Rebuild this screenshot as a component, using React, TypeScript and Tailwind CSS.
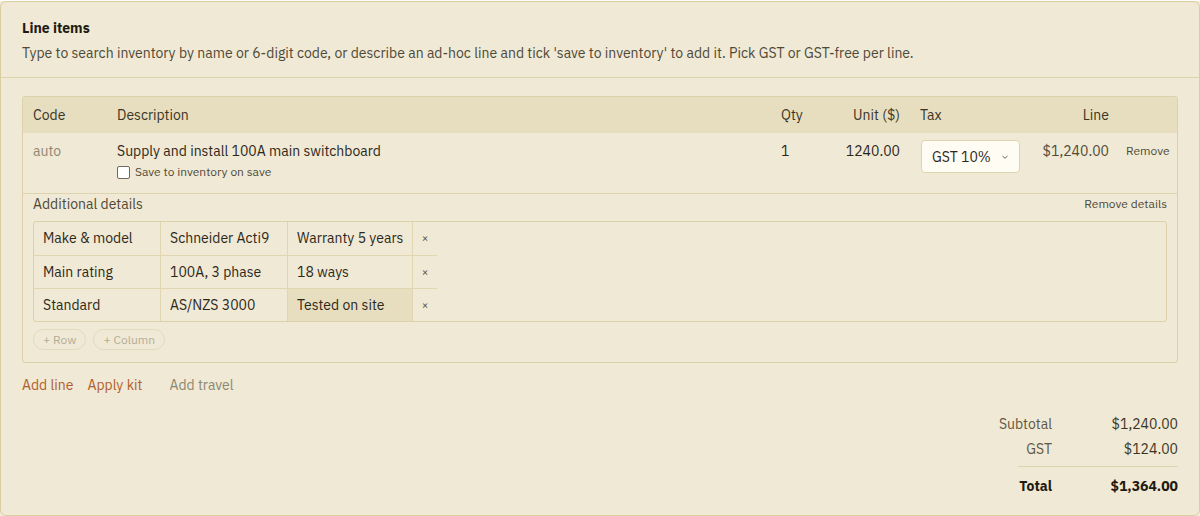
import React from 'react';

const detailRows = [
  ['Make & model', 'Schneider Acti9', 'Warranty 5 years'],
  ['Main rating', '100A, 3 phase', '18 ways'],
  ['Standard', 'AS/NZS 3000', 'Tested on site'],
];

const totals = [
  { label: 'Subtotal', value: '$1,240.00' },
  { label: 'GST', value: '$124.00' },
];

export default function App() {
  return (
    <div
      className="w-[1200px] h-[516px] bg-[#f1ead7] text-[#2c2819]"
      style={{ fontFamily: '"IBM Plex Sans", "Liberation Sans", Arial, sans-serif' }}
    >
      <div className="h-[515px] mt-px border border-[#d9cea2] rounded-md bg-[#f0e9d5] flex flex-col">
        {/* Header */}
        <div className="px-[21px] pt-[16px] pb-[14px] border-b border-[#ddd3ad]">
          <h2 className="text-[14px] leading-5 font-bold text-[#1f1b10]">Line items</h2>
          <p className="mt-[5px] text-[14px] leading-5 text-[#4f4a38]">
            Type to search inventory by name or 6-digit code, or describe an ad-hoc line and tick 'save to inventory' to add it. Pick GST or GST-free per line.
          </p>
        </div>

        {/* Body */}
        <div className="px-[21px] pt-[18px] flex flex-col">
          <div className="border border-[#dcd1a8] rounded-[3px] overflow-hidden">
            {/* Column header */}
            <div className="grid grid-cols-[84px_1fr_61px_81px_120px_89px_58px] h-[36px] items-center bg-[#e7dec0] text-[14px] text-[#3a3524]">
              <div className="pl-[10px]">Code</div>
              <div className="pl-[10px]">Description</div>
              <div className="pl-[13px]">Qty</div>
              <div className="pr-[10px] text-right">Unit ($)</div>
              <div className="pl-[10px]">Tax</div>
              <div className="pr-[10px] text-right">Line</div>
              <div />
            </div>

            {/* Line row */}
            <div className="grid grid-cols-[84px_1fr_61px_81px_120px_89px_58px] h-[60px] items-start pt-[8px] text-[14px] leading-5">
              <div className="pl-[10px] text-[#8f8872]">auto</div>
              <div className="pl-[10px]">
                <div className="text-[#2c2819]">Supply and install 100A main switchboard</div>
                <label className="mt-[3px] flex items-center gap-[5px] text-[12px] leading-4 text-[#4f4a38]">
                  <span className="w-[13px] h-[13px] rounded-[2px] border border-[#6f6a5a] bg-white" />
                  Save to inventory on save
                </label>
              </div>
              <div className="pl-[13px]">1</div>
              <div className="pr-[10px] text-right">1240.00</div>
              <div className="pl-[11px]">
                <div className="w-[99px] h-[33px] -mt-[1px] rounded-[4px] border border-[#ddd3ad] bg-[#fffcf3] flex items-center pl-[10px] gap-[10px] text-[14px]">
                  GST 10%
                  <svg width="8" height="8" viewBox="0 0 8 8" className="text-[#6b6552]">
                    <path d="M1.5 3 L4 5.3 L6.5 3" fill="none" stroke="currentColor" strokeWidth="1" />
                  </svg>
                </div>
              </div>
              <div className="pr-[10px] text-right text-[#4f4a38]">$1,240.00</div>
              <div className="pl-[7px] text-[12px] text-[#4f4a38]">Remove</div>
            </div>

            {/* Additional details */}
            <div className="border-t border-[#ddd3ad] px-[10px] pb-[12px]">
              <div className="flex items-center justify-between h-[20px]">
                <span className="text-[14px] text-[#4f4a38]">Additional details</span>
                <span className="text-[12px] text-[#4f4a38]">Remove details</span>
              </div>
              <div className="mt-[7px] border border-[#dcd1a8] rounded-[3px]">
                <div className="w-[403px]">
                  {detailRows.map((row, i) => (
                    <div
                      key={i}
                      className={`grid grid-cols-[127px_127px_125px_24px] h-[33px] ${i > 0 ? 'border-t border-[#e0d6b2]' : ''}`}
                    >
                      {row.map((cell, j) => (
                        <div
                          key={j}
                          className={`flex items-center pl-[9px] text-[14px] border-r border-[#e0d6b2] text-[#2c2819] ${i === 2 && j === 2 ? 'bg-[#e7dec0]' : ''}`}
                        >
                          {cell}
                        </div>
                      ))}
                      <div className="flex items-center justify-center text-[11px] text-[#4f4a38]">×</div>
                    </div>
                  ))}
                </div>
              </div>
              <div className="mt-[7px] flex gap-[7px]">
                <span className="h-[21px] px-[9px] rounded-full border border-[#e3dabb] text-[12px] leading-[19px] text-[#b3ad98]">+ Row</span>
                <span className="h-[21px] px-[9px] rounded-full border border-[#e3dabb] text-[12px] leading-[19px] text-[#b3ad98]">+ Column</span>
              </div>
            </div>
          </div>

          {/* Actions */}
          <div className="mt-[12px] flex items-center text-[14px] leading-5">
            <span className="text-[#b1602d]">Add line</span>
            <span className="ml-[14px] text-[#b1602d]">Apply kit</span>
            <span className="ml-[27px] text-[#8d8772]">Add travel</span>
          </div>

          {/* Totals */}
          <div className="mt-[19px] self-end flex flex-col items-end text-[14px] leading-5">
            {totals.map((t, i) => (
              <div key={t.label} className={`grid grid-cols-[80px_126px] ${i > 0 ? 'mt-[5px]' : ''}`}>
                <span className="text-right text-[#5d5743]">{t.label}</span>
                <span className="text-right text-[#3a3524]">{t.value}</span>
              </div>
            ))}
            <div className="mt-[7px] w-[160px] border-t border-[#ddd3ad]" />
            <div className="mt-[9px] grid grid-cols-[80px_126px] font-bold text-[#1f1b10]">
              <span className="text-right">Total</span>
              <span className="text-right">$1,364.00</span>
            </div>
          </div>
        </div>
      </div>
    </div>
  );
}
